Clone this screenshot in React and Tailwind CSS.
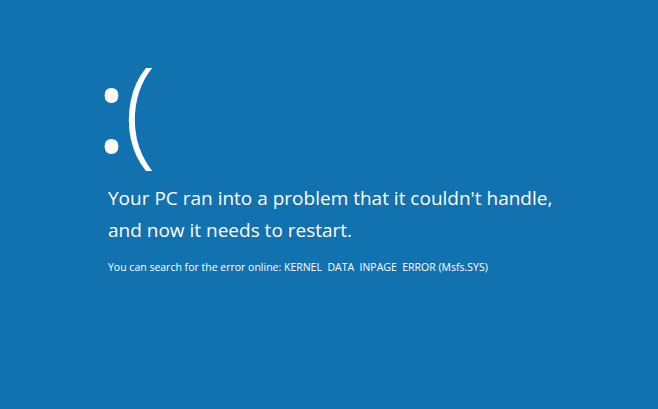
import React from 'react';

const App = () => {
  return (
    <div
      className="w-[658px] h-[409px] bg-[#1271af] text-white overflow-hidden"
      style={{ fontFamily: '"Open Sans", "Noto Sans", sans-serif' }}
    >
      <div className="pl-[108px] pt-[45px]">
        <div className="-ml-[12px] flex items-start text-[118px] leading-[124px]">
          <span className="font-normal w-[28px]">:</span>
          <span className="font-light">(</span>
        </div>
        <div className="mt-[13px] text-[19px] leading-[32px]">
          <p>Your PC ran into a problem that it couldn't handle,</p>
          <p>and now it needs to restart.</p>
        </div>
        <p className="mt-[13px] text-[10.5px] leading-[16px]">
          You can search for the error online: KERNEL&nbsp; DATA&nbsp; INPAGE&nbsp; ERROR (Msfs.SYS)
        </p>
      </div>
    </div>
  );
};

export default App;
